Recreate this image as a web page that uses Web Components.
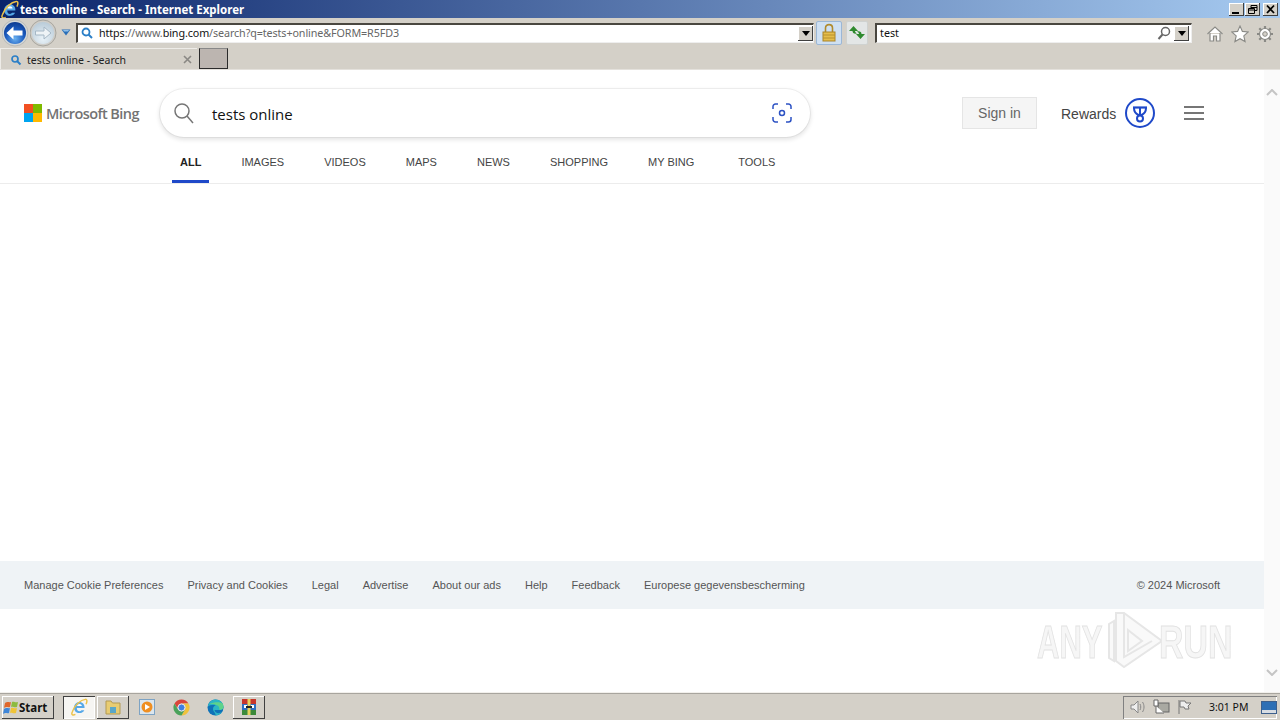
<!DOCTYPE html>
<html lang="en"><head><meta charset="utf-8"><title>tests online - Search</title>
<style>
html,body{margin:0;padding:0;height:720px;overflow:hidden;background:#fff}
body{display:flex;flex-direction:column;width:1280px;font-family:"Noto Sans",sans-serif}
</style></head><body>
<ie-titlebar>tests online - Search - Internet Explorer</ie-titlebar>
<ie-toolbar></ie-toolbar>
<ie-tabs></ie-tabs>
<bing-page></bing-page>
<win-taskbar></win-taskbar>
<script>
function el(name,html){customElements.define(name,class extends HTMLElement{constructor(){super();this.attachShadow({mode:'open'}).innerHTML=html}})}
const ieLogo=(s)=>`<svg width="${s}" height="${s}" viewBox="0 0 20 20"><path d="M4.500 11h11.700c.2-4-2.400-6.500-5.700-6.500-3.500 0-6 2.800-6 6.200 0 3.500 2.600 6 6 6 2.600 0 4.500-1.200 5.400-3.200h-3.200c-.5.800-1.200 1.200-2.200 1.200-1.600 0-2.800-1.200-2.900-3.700z" fill="#56a8e8"/><path d="M7.700 9h5.500c-.2-1.500-1.300-2.400-2.700-2.400S8 7.500 7.700 9z" fill="#fff"/><path d="M2.500 15.500C5 8 12 2 17 1.500c2.500-.3 2 3 .8 5.500M2.500 15.500c-1.500 3.500 1 4 3.500 2.800" fill="none" stroke="#ecc24a" stroke-width="1.600"/></svg>`;
el('ie-titlebar',`<style>
:host{display:flex;align-items:center;height:18px;flex:none;background:linear-gradient(90deg,#0a246a,#a6caf0);color:#fff;font:700 11.500px "Noto Sans",sans-serif}
svg{display:block}.t{margin-left:1px;white-space:nowrap;flex:1}
.b{display:flex;gap:1px;margin-right:2px}.b span{width:15px;height:13px;background:#d4d0c8;box-shadow:inset -1px -1px #404040,inset 1px 1px #fff;display:block}
.b span+span+span{margin-left:2px}.b svg{width:15px;height:13px}
</style>${ieLogo(19)}<span class="t"><slot></slot></span>
<div class="b"><span><svg viewBox="0 0 15 13"><rect x="3" y="9" width="7" height="2" fill="#000"/></svg></span><span><svg viewBox="0 0 15 13"><path d="M6 2.500h6v5h-2M6 4.500h6M3.500 5.500h6v5h-6zM3.500 7h6M6 2.500v3" fill="none" stroke="#000"/></svg></span><span><svg viewBox="0 0 15 13"><path d="M4 2.500l7 7.500M11 2.500l-7 7.500" stroke="#000" stroke-width="1.800"/></svg></span></div>`);
el('ie-toolbar',`<style>
:host{display:flex;align-items:center;height:29px;flex:none;background:#d4d0c8;padding-left:2px;box-sizing:border-box;font:10.750px "Noto Sans",sans-serif;color:#111}
svg{display:block;flex:none}
.box{height:20px;background:#fff;display:flex;align-items:center;box-sizing:border-box;border-top:2px solid #4a4740;border-left:2px solid #4a4740;border-right:1px solid #eee;border-bottom:1px solid #eee}
.addr{width:738px;margin-left:5px}
.url{flex:1;margin-left:5px;white-space:nowrap;color:#666;letter-spacing:-.1px}.url b{font-weight:400;color:#111}
.dd{width:15px;height:15px;background:#d4d0c8;box-shadow:inset -1px -1px #404040,inset 1px 1px #fff;display:flex;align-items:center;justify-content:center;flex:none}
.dd i{border:4px solid transparent;border-top:5px solid #000;border-bottom:0}
.sq{height:24px;border-radius:2px;display:flex;align-items:center;justify-content:center;box-sizing:border-box;flex:none}
.lock{width:26px;margin-left:2px;background:#cfe0f2;border:1px solid #9bb7d6}
.ref{width:22px;margin-left:4px;background:#e3e6e6;border:1px solid #cfd2d0}
.s{width:317px;margin-left:7px;padding-left:3px}.s span{flex:1}
.tools{display:flex;gap:7px;margin-left:14px;margin-top:3px}
</style>
<svg width="28" height="28" viewBox="0 0 28 28"><defs><radialGradient id="bk" cx=".5" cy=".75" r=".75"><stop offset="0" stop-color="#6cb2f0"/><stop offset=".55" stop-color="#1c5cc0"/><stop offset="1" stop-color="#0c3a90"/></radialGradient><radialGradient id="fw" cx=".5" cy=".75" r=".75"><stop offset="0" stop-color="#e9f2f8"/><stop offset="1" stop-color="#b9cbd8"/></radialGradient></defs><circle cx="13" cy="14" r="13" fill="#d3d7d8" stroke="#a8a8a4" stroke-width=".6"/><circle cx="13" cy="14" r="11" fill="url(#bk)"/><path d="M4.500 14l7-6.500v4h9v5h-9v4z" fill="#fff"/></svg>
<svg width="28" height="28" viewBox="0 0 28 28"><circle cx="13" cy="14" r="13" fill="#cfcdc8" stroke="#a8a69f"/><circle cx="13" cy="14" r="11" fill="url(#fw)"/><path d="M21 14l-7-6v4H5.500v4H14v4z" fill="#eef3f6" stroke="#a6b8c6"/></svg>
<svg width="10" height="7" viewBox="0 0 10 7" style="margin-left:3px"><path d="M.5.500h9L5 6.500z" fill="#2a6fb8"/><path d="M2 1h6L7 2.500H3z" fill="#8fc0ea"/></svg>
<div class="box addr"><svg width="14" height="14" viewBox="0 0 14 14" style="margin-left:2px"><circle cx="6" cy="6" r="3.500" fill="none" stroke="#2b7fc7" stroke-width="1.800"/><path d="M8.500 8.500l3.500 3.500" stroke="#2b7fc7" stroke-width="2"/></svg>
<span class="url"><b>https</b>://www.<b>bing.com</b>/search?q=tests+online&amp;FORM=R5FD3</span><span class="dd"><i></i></span></div>
<div class="sq lock"><svg width="16" height="19" viewBox="0 0 16 19"><path d="M4.500 9V5c0-4.500 7-4.500 7 0v4" fill="none" stroke="#b08a2c" stroke-width="1.600"/><rect x="2" y="9" width="12" height="9" fill="#e5bd4b" stroke="#a9842a"/><path d="M2 12h12M2 15h12" stroke="#b8912f"/></svg></div>
<div class="sq ref"><svg width="18" height="15" viewBox="0 0 18 15"><path d="M1 6l4.500-5L10 6H7c0 1 1 2 2 2.500-3 .5-4.500-.5-4.500-2.500z" fill="#2f8a2f"/><path d="M17 9l-4.500 5L8 9h3c0-1-1-2-2-2.500 3-.5 4.500.5 4.500 2.500z" fill="#2f8a2f"/></svg></div>
<div class="box s"><span>test</span><svg width="14" height="15" viewBox="0 0 14 15" style="margin-right:3px"><circle cx="8.500" cy="5.500" r="4" fill="none" stroke="#666" stroke-width="1.500"/><path d="M5.500 8.500L1.500 13" stroke="#666" stroke-width="2"/></svg><span class="dd" style="flex:none"><i></i></span><span style="flex:none;width:2px"></span></div>
<div class="tools">
<svg width="18" height="18" viewBox="0 0 18 18"><path d="M1.500 9L9 2l7.500 7M4 8v8h3.500v-5h3v5H14V8" fill="#fff" stroke="#8a8a86" stroke-width="1.200"/></svg>
<svg width="18" height="18" viewBox="0 0 18 18"><path d="M9 1l2.400 5.400 5.800.6-4.400 3.900 1.300 5.700L9 13.700l-5.100 2.900 1.300-5.700L.8 7l5.800-.6z" fill="#fff" stroke="#8a8a86" stroke-width="1.100"/></svg>
<svg width="18" height="18" viewBox="0 0 18 18"><circle cx="9" cy="9" r="5.500" fill="#fff" stroke="#8a8a86" stroke-width="1.200"/><circle cx="9" cy="9" r="2.300" fill="#d4d0c8" stroke="#8a8a86"/><path d="M9 1v3M9 14v3M1 9h3M14 9h3M3.300 3.300l2.100 2.100M12.600 12.600l2.100 2.100M3.300 14.700l2.100-2.100M12.600 5.400l2.100-2.100" stroke="#8a8a86" stroke-width="2.200"/></svg>
</div>`);
el('ie-tabs',`<style>
:host{display:flex;height:23px;flex:none;background:#d4d0c8;font:10.500px "Noto Sans",sans-serif;color:#222;align-items:stretch;padding-top:1px;box-sizing:border-box;border-bottom:1px solid #e4e1dc}
svg{display:block;flex:none}
.tab{width:197px;display:flex;align-items:center;padding:1px 0 0 9px;box-sizing:border-box;border-top:1px solid #eeece8;border-left:1px solid #eeece8}
.t{margin-left:5px;flex:1}
.new{width:29px;margin-left:2px;background:#bcb5b0;box-sizing:border-box;border:1px solid #2a2a2a;border-top-color:#888}
</style><div class="tab"><svg width="12" height="12" viewBox="0 0 12 12"><circle cx="5" cy="5" r="3" fill="none" stroke="#2b7fc7" stroke-width="1.700"/><path d="M7 7l3.500 3.500" stroke="#2b7fc7" stroke-width="2"/></svg><span class="t">tests online - Search</span><svg width="9" height="9" viewBox="0 0 9 9" style="margin-right:5px"><path d="M1 1l7 7M8 1L1 8" stroke="#8a8884" stroke-width="1.600"/></svg></div><div class="new"></div>`);
el('bing-logo',`<style>:host{display:flex;align-items:center;width:136px;flex:none;font:600 14.500px "Open Sans",sans-serif;color:#737373;letter-spacing:-.6px}
.g{display:grid;grid-template-columns:9px 9px;grid-template-rows:9px 9px;margin-right:4px}.g i{display:block}</style>
<div class="g"><i style="background:#f25022"></i><i style="background:#7fba00"></i><i style="background:#00a4ef"></i><i style="background:#ffb900"></i></div><span>Microsoft Bing</span>`);
el('bing-search',`<style>:host{display:flex;align-items:center;width:650px;height:48px;flex:none;border-radius:24px;background:#fff;box-shadow:0 0 0 1px rgba(0,0,0,.05),0 2px 4px 1px rgba(0,0,0,.1);font:15px "Open Sans",sans-serif;color:#111;box-sizing:border-box;padding:0 18px 0 14px}
svg{display:block;flex:none}span{flex:1;margin-left:18px;padding-top:2px}</style>
<svg width="20" height="21" viewBox="0 0 20 21"><circle cx="8" cy="8" r="7" fill="none" stroke="#767676" stroke-width="1.500"/><path d="M13 13l6 7" stroke="#767676" stroke-width="1.500"/></svg><span>tests online</span>
<svg width="20" height="20" viewBox="0 0 20 20" fill="none" stroke="#2c52c4" stroke-width="1.500"><path d="M1 6V3.500A2.500 2.500 0 0 1 3.500 1H6M14 1h2.500A2.500 2.500 0 0 1 19 3.500V6M19 14v2.500a2.500 2.500 0 0 1-2.500 2.500H14M6 19H3.500A2.500 2.500 0 0 1 1 16.500V14"/><circle cx="10" cy="10" r="2.500"/></svg>`);
el('bing-header',`<style>:host{display:flex;align-items:center;padding:19px 0 0 24px;flex:none;font:14px "Liberation Sans",Arial,sans-serif}
svg{display:block;flex:none}
.si{width:75px;height:32px;margin-left:152px;box-sizing:border-box;background:#f5f5f5;border:1px solid #e5e5e5;color:#666;display:flex;align-items:center;justify-content:center;flex:none}
.r{margin-left:24px;color:#444;flex:none;padding-top:1px}.rw{margin-left:9px}.h{margin-left:29px}
</style><bing-logo></bing-logo><bing-search></bing-search><div class="si">Sign in</div><span class="r">Rewards</span>
<svg class="rw" width="30" height="30" viewBox="0 0 30 30" fill="none" stroke="#1f49c9"><circle cx="15" cy="15" r="14" stroke-width="2"/><path d="M8 9.500h14" stroke-width="2.200"/><path d="M9 10c0 3.500 2 5.800 4.500 7h3c2.500-1.200 4.500-3.500 4.500-7M15 10v6" stroke-width="2"/><circle cx="15" cy="20.500" r="3" stroke-width="2"/></svg>
<svg class="h" width="20" height="14" viewBox="0 0 20 14" fill="#767676"><rect width="20" height="2"/><rect y="6" width="20" height="2"/><rect y="12" width="20" height="2"/></svg>`);
el('bing-nav',`<style>:host{display:flex;gap:24px;margin-top:16px;padding-left:172px;height:30px;flex:none;font:11px "Liberation Sans",Arial,sans-serif;color:#444;border-bottom:1px solid #ececec}
span{padding:3px 8px 0;box-sizing:border-box;height:30px;display:block}
.on{color:#222;font-weight:700;border-bottom:3px solid #1f49c9}.l{margin-left:4px}</style>
<span class="on">ALL</span><span>IMAGES</span><span>VIDEOS</span><span>MAPS</span><span>NEWS</span><span>SHOPPING</span><span>MY BING</span><span class="l">TOOLS</span>`);
el('bing-footer',`<style>:host{display:flex;align-items:center;gap:24px;height:48px;flex:none;background:#eff3f6;padding:0 44px 0 24px;font:11px "Liberation Sans",Arial,sans-serif;color:#555}
.c{margin-left:auto}</style>
<span>Manage Cookie Preferences</span><span>Privacy and Cookies</span><span>Legal</span><span>Advertise</span><span>About our ads</span><span>Help</span><span>Feedback</span><span>Europese gegevensbescherming</span><span class="c">© 2024 Microsoft</span>`);
el('any-run',`<style>:host{position:absolute;left:1037px;top:538px;width:196px;height:66px;display:flex;align-items:center;font:700 47px "Liberation Sans",sans-serif;color:#f6f6f6;-webkit-text-stroke:1px #e2e2e2;pointer-events:none;filter:blur(.4px)}
svg{display:block;flex:none}span{display:block;transform-origin:left center;flex:none}</style>
<span style="transform:scaleX(.66);width:67px">ANY</span><svg width="60" height="66" viewBox="0 0 60 66" fill="none" stroke="#e6e6e6" stroke-width="2"><path d="M5 16v34l5 3V13zM12 5v48l8 6 38-26L20 5z" fill="#f9f9f9"/><path d="M20 5v44l28-16M24 22l14 11-14 10z"/></svg><span style="transform:scaleX(.72);width:69px;margin-left:-5px">RUN</span>`);
el('bing-page',`<style>:host{display:flex;flex:1;position:relative;min-height:0;overflow:hidden;background:#fff}
.m{flex:1;display:flex;flex-direction:column;min-width:0}.sp{flex:1}.end{height:83px;flex:none}
.sb{width:16px;flex:none;background:#fafafa;display:flex;flex-direction:column;justify-content:space-between;padding:19px 0 16px;box-sizing:border-box;align-items:center}
svg{display:block}</style><div class="m"><bing-header></bing-header><bing-nav></bing-nav><div class="sp"></div><bing-footer></bing-footer><div class="end"></div></div>
<div class="sb"><svg width="12" height="7" viewBox="0 0 12 7"><path d="M1 6l5-5 5 5" fill="none" stroke="#c4c4c4" stroke-width="2"/></svg><svg width="12" height="7" viewBox="0 0 12 7"><path d="M1 1l5 5 5-5" fill="none" stroke="#c4c4c4" stroke-width="2"/></svg></div><any-run></any-run>`);
el('win-taskbar',`<style>:host{display:flex;align-items:center;height:28px;flex:none;background:#d4d0c8;border-top:1px solid #f2f0ec;box-shadow:inset 0 1px #a8a59e;box-sizing:border-box;padding:1px 3px 0 2px;font:10.500px "Noto Sans",sans-serif;color:#111}
svg{display:block;flex:none}
.btn{height:23px;display:flex;align-items:center;justify-content:center;box-sizing:border-box;box-shadow:inset -1px -1px #404040,inset 1px 1px #fff;flex:none}
.st{width:52px;font-weight:700;font-size:11.500px;justify-content:flex-start;padding-left:1px}
.st svg{margin-right:-1px}
.ie{width:32px;margin-left:9px;background:#f6f5f2;box-shadow:inset 1px 1px #404040,inset -1px -1px #fff}
.ex{width:32px;margin-left:2px}
.ic{width:34px;display:flex;justify-content:center;flex:none}
.wr{width:32px;margin-left:1px}
.tray{margin-left:auto;width:154px;height:23px;box-sizing:border-box;box-shadow:inset 1px 1px #808080,inset -1px -1px #fff;display:flex;align-items:center;padding-left:5px;flex:none}
.time{margin-left:16px;width:40px;white-space:nowrap}
</style>
<div class="btn st"><svg width="17" height="17" viewBox="0 0 17 17"><path d="M2 4c3-2 4 0 6-1l-1 5c-2 1-3-1-6 1z" fill="#e0672b"/><path d="M9 3c2-1 3 1 6 0l-1 5c-3 1-4-1-6 0z" fill="#8dbb3f"/><path d="M1 10c3-2 4 0 6-1l-1 5c-2 1-3-1-6 1z" fill="#3f86d8"/><path d="M8 9c2-1 3 1 6 0l-1 5c-3 1-4-1-6 0z" fill="#f0c437"/></svg>Start</div>
<div class="btn ie">${ieLogo(18)}</div>
<div class="btn ex"><svg width="18" height="18" viewBox="0 0 18 18"><path d="M2 3h5l1.500 2H16v11H2z" fill="#e8cc72" stroke="#b39a52"/><path d="M6 9h6v6H6z" fill="#5aa7c9"/></svg></div>
<div class="ic" style="margin-left:1px"><svg width="16" height="16" viewBox="0 0 16 16"><rect x=".5" y=".5" width="15" height="15" fill="#dbe6ee" stroke="#7da3c4"/><circle cx="8" cy="8" r="5.500" fill="#ef8f22"/><path d="M6 5l5 3-5 3z" fill="#fff"/></svg></div>
<div class="ic"><svg width="17" height="17" viewBox="0 0 17 17"><path d="M8.500.5A8 8 0 0 1 15.430 4.500H8.500A4 4 0 0 0 5 10.500L1.570 4.500A8 8 0 0 1 8.500.5z" fill="#d9453a"/><path d="M15.430 4.500A8 8 0 0 1 8.500 16.500L12 10.500A4 4 0 0 0 8.500 4.500z" fill="#f0c23b"/><path d="M1.570 4.500A8 8 0 0 0 8.500 16.500L12 10.500A4 4 0 0 1 5 10.500z" fill="#4aa25a"/><circle cx="8.500" cy="8.500" r="3.500" fill="#3f7fe0" stroke="#e8e8e8"/></svg></div>
<div class="ic"><svg width="17" height="17" viewBox="0 0 17 17"><circle cx="8.500" cy="8.500" r="8" fill="#0f72b8"/><path d="M.8 7.500C1.800 3 5 .5 8.500.5c4.500 0 8 3.300 8 7.500 0 2.200-2 3-4 3H7.500c.2 3 4 4 7.500 2.300-1.500 2-4 3.200-6.500 3.200C9 14 6 12.500 6 10c0-2 1.500-3.500 3-4-3.500-.5-7 .5-8.200 1.500z" fill="#2cb5c4"/><path d="M9 6c2 .3 3.500 1.500 3.500 5 2 0 4-.8 4-3 0-1.500-.5-3-1.500-4C12.500 2.800 6 3 2.500 5 5 4.800 7 5 9 6z" fill="#5fd38a"/></svg></div>
<div class="btn wr"><svg width="18" height="18" viewBox="0 0 18 18"><rect x="2" y="1" width="14" height="5" fill="#c7362c"/><rect x="2" y="6" width="14" height="6" fill="#2e6fc2"/><rect x="2" y="12" width="14" height="5" fill="#3d8a3a"/><rect x="4" y="7" width="3" height="3" fill="#fff"/><rect x="11" y="7" width="3" height="3" fill="#fff"/><rect x="7.500" y="1" width="3" height="16" fill="#e8d25c"/><rect x="6" y="8" width="6" height="2" fill="#222"/></svg></div>
<div class="tray">
<svg width="18" height="16" viewBox="0 0 18 16" fill="none" stroke="#888"><path d="M3 6h3l4-4v12l-4-4H3z" fill="#eee"/><path d="M12 5c1 2 1 4 0 6M14.500 3c2 3 2 7 0 10"/></svg>
<svg width="18" height="16" viewBox="0 0 18 16" style="margin-left:6px"><rect x="6" y="4" width="11" height="9" fill="#a9a9a2" stroke="#666"/><path d="M2 1h4v6H2zM4 7v7h8" fill="#fff" stroke="#666"/></svg>
<svg width="16" height="16" viewBox="0 0 16 16" style="margin-left:7px" fill="#eee" stroke="#777"><path d="M2 1v14"/><path d="M3 2h5l1 2h5l-3 3 1 3H8L7 8H3z"/></svg>
<span class="time">3:01 PM</span>
<svg width="16" height="13" viewBox="0 0 16 13" style="margin-left:12px"><rect x=".5" y=".5" width="15" height="12" fill="#2d6fb5" stroke="#3c5f8c"/><rect x="1" y="9" width="14" height="3" fill="#d8dde3"/></svg>
</div>`);
</script></body></html>
